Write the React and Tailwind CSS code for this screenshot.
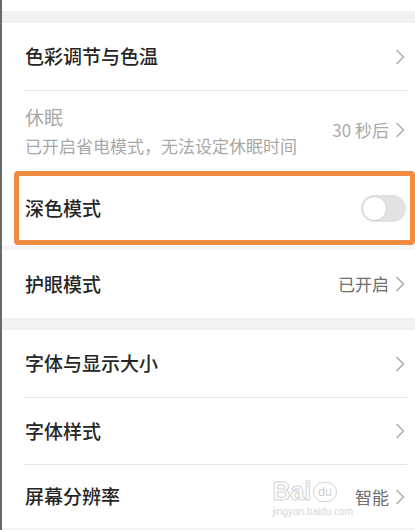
import React, { useState } from 'react';

const FONT = { fontFamily: '"Noto Sans CJK SC", "Noto Sans", sans-serif' };

const Chevron = () => (
  <svg width="10" height="16" viewBox="0 0 10 16" className="shrink-0">
    <path d="M2 1.5 L8.5 8 L2 14.5" fill="none" stroke="#b0b0b0" strokeWidth="1.6" strokeLinecap="round" strokeLinejoin="round" />
  </svg>
);

const Divider = () => <div className="ml-[22px] mr-[8px] h-px bg-[#e6e6e6]" />;

const Band = ({ h }) => <div className={`bg-[#f2f2f2] ${h}`} />;

const Row = ({ title, value, height = 'h-[65px]' }) => (
  <div className={`flex items-center justify-between pl-[23px] pr-[10px] ${height}`}>
    <span className="text-[19px] font-medium text-[#262626]">{title}</span>
    <div className="flex items-center gap-[6px]">
      {value && <span className="text-[17px] text-[#6e6e6e]">{value}</span>}
      <Chevron />
    </div>
  </div>
);

const Watermark = () => (
  <div className="absolute right-[62px] top-[14px] flex flex-col items-start pointer-events-none select-none opacity-90">
    <div className="flex items-center">
      <span
        className="text-[25px] font-bold leading-none text-white"
        style={{ WebkitTextStroke: '1px #d0d0d0', fontFamily: '"Liberation Sans", sans-serif' }}
      >
        Bai
      </span>
      <span
        className="ml-[2px] rounded-full border border-[#d0d0d0] px-[4px] text-[12px] leading-[18px] text-[#c4c4c4]"
        style={{ fontFamily: '"Liberation Sans", sans-serif' }}
      >
        du
      </span>
    </div>
    <span className="mt-[3px] text-[10px] leading-none text-[#d4d4d4]" style={{ fontFamily: '"Liberation Sans", sans-serif' }}>
      jingyan.baidu.com
    </span>
  </div>
);

export default function App() {
  const [dark, setDark] = useState(false);

  return (
    <div className="w-[415px] h-[530px] overflow-hidden bg-white border-l-2 border-[#6a6a6a]" style={FONT}>
      <div className="h-[11px]" />
      <Band h="h-[12px]" />

      <Row title="色彩调节与色温" height="h-[67px]" />
      <Divider />

      {/* Sleep (disabled) */}
      <div className="flex items-center justify-between pl-[23px] pr-[10px] h-[80px]">
        <div className="flex flex-col gap-[6px]">
          <span className="text-[19px] leading-[24px] text-[#a8a8a8]">休眠</span>
          <span className="text-[17px] leading-[22px] text-[#a8a8a8]">已开启省电模式，无法设定休眠时间</span>
        </div>
        <div className="flex items-center gap-[6px] pb-[2px]">
          <span className="text-[17px] text-[#a8a8a8]">30 秒后</span>
          <Chevron />
        </div>
      </div>

      {/* Dark mode, highlighted */}
      <div className="ml-[12px] mr-0 h-[74px] rounded-[4px] border-[5px] border-[#f08c42] flex items-center justify-between pl-[6px] pr-[4px]">
        <span className="text-[19px] font-medium text-[#262626]">深色模式</span>
        <button
          onClick={() => setDark(!dark)}
          className={`relative w-[45px] h-[27px] rounded-full ${dark ? 'bg-[#3b7cf5]' : 'bg-[#e2e2e2]'}`}
        >
          <span
            className={`absolute top-[1px] w-[25px] h-[25px] rounded-full bg-white border border-[#d4d4d4] ${dark ? 'left-[19px]' : 'left-[1px]'}`}
          />
        </button>
      </div>
      <div className="h-[5px] bg-[#f6f6f6]" />

      <Row title="护眼模式" value="已开启" height="h-[68px]" />
      <Band h="h-[12px]" />

      <Row title="字体与显示大小" height="h-[67px]" />
      <Divider />
      <Row title="字体样式" height="h-[66px]" />
      <Divider />
      <div className="relative">
        <Row title="屏幕分辨率" value="智能" height="h-[63px]" />
        <Watermark />
      </div>
      <Band h="h-[6px]" />
    </div>
  );
}
